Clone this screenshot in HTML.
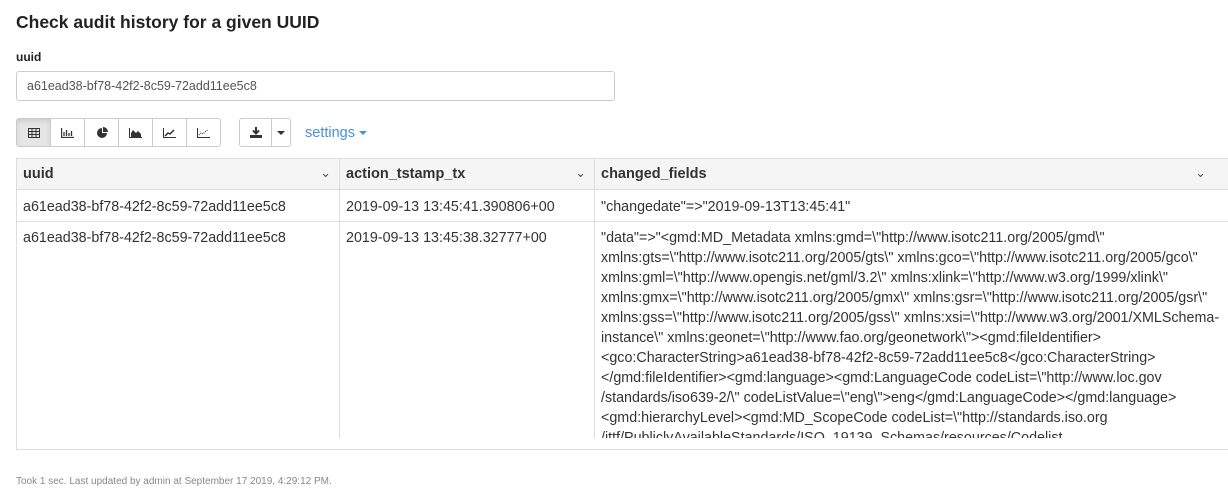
<!DOCTYPE html>
<html><head><style>
body{margin:0;width:1228px;height:502px;overflow:hidden;background:#fff;font-family:"Liberation Sans",sans-serif;color:#333;position:relative}
.a{position:absolute}
h1{position:absolute;left:16px;top:12px;margin:0;font-size:17.5px;font-weight:bold;color:#222}
.inp{left:16px;top:71px;width:599px;height:30px;border:1px solid #ccc;border-radius:3px;box-sizing:border-box;font-size:12.5px;color:#555;padding:7px 10px}
.btn{top:118px;height:29px;width:35px;border:1px solid #ccc;box-sizing:border-box;background:#fff;display:flex;align-items:center;justify-content:center}
.tbl{left:16px;top:158px;width:1212px;height:292px;border:1px solid #ddd;border-right:none;box-sizing:border-box;overflow:hidden}
.hd{top:0;height:31px;background:#f5f5f5;border-bottom:1px solid #ddd;font-weight:bold;font-size:14.5px;line-height:31px;padding-left:6px;box-sizing:border-box;border-right:1px solid #ddd}
.c{font-size:14.3px;padding:0 6px;box-sizing:border-box;border-right:1px solid #ddd;line-height:20px}
.car{position:absolute;right:8px;top:-2px;font-weight:normal;font-size:13px;color:#555}
</style></head><body>
<h1>Check audit history for a given UUID</h1>
<div class="a" style="left:16px;top:50px;font-size:12px;font-weight:bold;color:#222">uuid</div>
<div class="a inp">a61ead38-bf78-42f2-8c59-72add11ee5c8</div>
<div class="a btn" style="left:16px;border-radius:3px 0 0 3px;background:#e6e6e6;box-shadow:inset 0 2px 4px rgba(0,0,0,.12)"><svg width="12" height="10"><rect x=".5" y=".5" width="11" height="9" fill="none" stroke="#333"/><path d="M0 3.5H12M0 6.5H12M4 0V10M8 0V10" stroke="#333" fill="none"/></svg></div>
<div class="a btn" style="left:50px"><svg width="13" height="10"><path d="M.5 0V9.5H13M3 4V8M5.5 2V8M8 5V8M10.5 3V8" stroke="#333" stroke-width="1.3" fill="none"/></svg></div>
<div class="a btn" style="left:84px"><svg width="12" height="12"><path d="M6 1A5 5 0 1 0 11 6H6Z" fill="#333"/><path d="M7 0A5 5 0 0 1 12 5H7Z" fill="#333"/></svg></div>
<div class="a btn" style="left:118px"><svg width="13" height="10"><path d="M.5 0V9.5H13" stroke="#333" fill="none"/><path d="M2 9V5L4 2L7 5L9 3L12 6V9Z" fill="#333"/></svg></div>
<div class="a btn" style="left:152px"><svg width="13" height="10"><path d="M.5 0V9.5H13" stroke="#333" fill="none"/><path d="M2 8L5 5L7 6L11 2" stroke="#333" stroke-width="1.5" fill="none"/></svg></div>
<div class="a btn" style="left:186px;border-radius:0 3px 3px 0"><svg width="13" height="10"><path d="M.5 0V9.5H13" stroke="#333" fill="none"/><path d="M2 7L4 5L6 6L9 3L11 2" stroke="#333" stroke-dasharray="1 1" fill="none"/></svg></div>
<div class="a btn" style="left:239px;width:33px;border-radius:3px 0 0 3px"><svg width="12" height="11"><path d="M6 0V6M3 3.5L6 6.5L9 3.5" stroke="#333" stroke-width="2" fill="none"/><rect x="0" y="8" width="12" height="3" fill="#333"/></svg></div>
<div class="a btn" style="left:271px;width:20px;border-radius:0 3px 3px 0"><svg width="8" height="4"><path d="M0 0H8L4 4Z" fill="#333"/></svg></div>
<div class="a" style="left:305px;top:125px;font-size:14.5px;color:#4a90d9">settings <svg width="8" height="4" style="vertical-align:middle"><path d="M0 0H8L4 4Z" fill="#4a90d9"/></svg></div>
<div class="a tbl">
<div class="a hd" style="left:0;width:323px">uuid<span class="car">⌄</span></div>
<div class="a hd" style="left:323px;width:255px">action_tstamp_tx<span class="car">⌄</span></div>
<div class="a hd" style="left:578px;width:634px;border-right:1px solid #ddd">changed_fields<span class="car" style="right:22px">⌄</span></div>
<div class="a" style="left:0;top:62px;width:1212px;border-top:1px solid #ddd"></div>
<div class="a c" style="left:0;top:31px;width:323px;height:248px;padding-top:7px">a61ead38-bf78-42f2-8c59-72add11ee5c8<div style="margin-top:11px">a61ead38-bf78-42f2-8c59-72add11ee5c8</div></div>
<div class="a c" style="left:323px;top:31px;width:255px;height:248px;padding-top:7px">2019-09-13 13:45:41.390806+00<div style="margin-top:11px">2019-09-13 13:45:38.32777+00</div></div>
<div class="a c" style="left:578px;top:31px;width:634px;height:248px;padding-top:7px;border-right:1px solid #ddd;overflow:hidden;white-space:nowrap">"changedate"=&gt;"2019-09-13T13:45:41"<div style="margin-top:11px">"data"=&gt;"&lt;gmd:MD_Metadata xmlns:gmd=\"http://www.isotc211.org/2005/gmd\"<br>xmlns:gts=\"http://www.isotc211.org/2005/gts\" xmlns:gco=\"http://www.isotc211.org/2005/gco\"<br>xmlns:gml=\"http://www.opengis.net/gml/3.2\" xmlns:xlink=\"http://www.w3.org/1999/xlink\"<br>xmlns:gmx=\"http://www.isotc211.org/2005/gmx\" xmlns:gsr=\"http://www.isotc211.org/2005/gsr\"<br>xmlns:gss=\"http://www.isotc211.org/2005/gss\" xmlns:xsi=\"http://www.w3.org/2001/XMLSchema-<br>instance\" xmlns:geonet=\"http://www.fao.org/geonetwork\"&gt;&lt;gmd:fileIdentifier&gt;<br>&lt;gco:CharacterString&gt;a61ead38-bf78-42f2-8c59-72add11ee5c8&lt;/gco:CharacterString&gt;<br>&lt;/gmd:fileIdentifier&gt;&lt;gmd:language&gt;&lt;gmd:LanguageCode codeList=\"http://www.loc.gov<br>/standards/iso639-2/\" codeListValue=\"eng\"&gt;eng&lt;/gmd:LanguageCode&gt;&lt;/gmd:language&gt;<br>&lt;gmd:hierarchyLevel&gt;&lt;gmd:MD_ScopeCode codeList=\"http://standards.iso.org<br>/ittf/PubliclyAvailableStandards/ISO_19139_Schemas/resources/Codelist</div></div>
</div>
<div class="a" style="left:16px;top:476px;font-size:10px;color:#888">Took 1 sec. Last updated by admin at September 17 2019, 4:29:12 PM.</div>
</body></html>
